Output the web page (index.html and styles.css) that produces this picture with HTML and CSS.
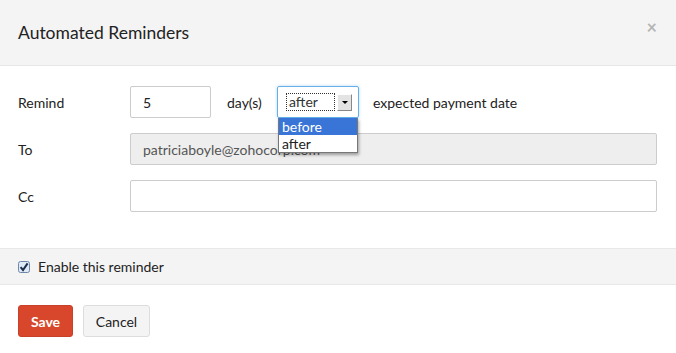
FILE: index.html
```html
<!DOCTYPE html>
<html lang="en">
<head>
  <meta charset="UTF-8" />
  <title>Automated Reminders</title>
  <link rel="stylesheet" href="styles.css">
</head>
<body>
  <div class="modal">
    <div class="modal-header">
      <h3>Automated Reminders</h3>
      <span class="close">&times;</span>
    </div>

    <div class="modal-body">
      <div class="row">
        <label class="lbl">Remind</label>
        <input type="text" class="field days" value="5" />
        <span class="txt daytxt">day(s)</span>
        <div class="select">
          <div class="select-box">
            <span class="select-val">after</span>
            <span class="select-btn"></span>
          </div>
          <ul class="options">
            <li class="active">before</li>
            <li>after</li>
          </ul>
        </div>
        <span class="txt">expected payment date</span>
      </div>

      <div class="row">
        <label class="lbl">To</label>
        <input type="text" class="field wide readonly" value="patriciaboyle@zohocorp.com" readonly />
      </div>

      <div class="row">
        <label class="lbl">Cc</label>
        <input type="text" class="field wide" />
      </div>
    </div>

    <div class="enable">
      <span class="check">
        <svg width="12" height="12" viewBox="0 0 12 12">
          <rect x="0.5" y="0.5" width="11" height="11" rx="2" fill="#dfe9f7" stroke="#6c87a8"/>
          <path d="M2.6 6.2 L5 9 L9.6 2.4" fill="none" stroke="#1c2f4a" stroke-width="2"/>
        </svg>
      </span>
      Enable this reminder
    </div>

    <div class="modal-footer">
      <button class="btn btn-save">Save</button>
      <button class="btn btn-cancel">Cancel</button>
    </div>
  </div>
</body>
</html>
```

FILE: styles.css
```css
body {
  margin: 0;
  background: #fff;
  font-family: Lato, "Open Sans", Arial, sans-serif;
  font-size: 14px;
  color: #222;
}
.modal {
  width: 676px;
}
.modal-header {
  background: #f4f4f4;
  height: 66px;
  border-bottom: 1px solid #e6e6e6;
  display: flex;
  align-items: center;
  justify-content: space-between;
  padding: 0 18px;
  box-sizing: border-box;
}
.modal-header h3 {
  margin: 0;
  font-weight: normal;
  font-size: 17.5px;
  color: #222;
  padding-bottom: 1px;
}
.close {
  color: #b5b5b5;
  font-size: 18px;
  font-weight: bold;
  margin-right: 1px;
  margin-top: -11px;
}
.modal-body {
  padding: 20px 18px 36px 18px;
}
.row {
  display: flex;
  align-items: center;
  margin-bottom: 15px;
}
.row:last-child {
  margin-bottom: 0;
}
.lbl {
  width: 112px;
  flex: none;
}
.field {
  height: 32px;
  box-sizing: border-box;
  border: 1px solid #ccc;
  border-radius: 2px;
  padding: 0 12px;
  font-family: inherit;
  font-size: 14px;
  color: #222;
  outline: none;
}
.days {
  width: 81px;
}
.daytxt {
  width: 50px;
  margin-left: 16px;
}
.wide {
  flex: 1;
  margin-right: 1px;
}
.readonly {
  background: #eee;
  color: #555;
}
/* select with open list */
.select {
  position: relative;
  width: 82px;
  margin-right: 14px;
}
.select-box {
  height: 32px;
  box-sizing: border-box;
  border: 1px solid #66afe9;
  border-radius: 2px;
  box-shadow: 0 0 3px rgba(102, 175, 233, 0.5);
  display: flex;
  align-items: center;
  padding: 0 6px 0 8px;
}
.select-val {
  border: 1px dotted #333;
  width: 49px;
  height: 18px;
  line-height: 16px;
  padding-left: 2px;
  box-sizing: border-box;
  color: #333;
}
.select-btn {
  width: 15px;
  height: 17px;
  margin-left: 2px;
  background: #e3e3e3;
  border-right: 1px solid #888;
  border-bottom: 1px solid #888;
  border-top: 1px solid #fff;
  border-left: 1px solid #fff;
  box-sizing: border-box;
  position: relative;
}
.select-btn::after {
  content: "";
  position: absolute;
  left: 4px;
  top: 6px;
  border-left: 3px solid transparent;
  border-right: 3px solid transparent;
  border-top: 3px solid #000;
}
.options {
  position: absolute;
  top: 32px;
  left: 1px;
  width: 80px;
  margin: 0;
  padding: 0;
  list-style: none;
  background: #fff;
  border: 1px solid #777;
  border-top: none;
  box-sizing: border-box;
  box-shadow: 1px 2px 3px rgba(0, 0, 0, 0.35);
  font-size: 14px;
}
.options li {
  height: 17px;
  line-height: 17px;
  padding-left: 3px;
  color: #222;
}
.options li.active {
  background: #3875d7;
  color: #fff;
}
/* enable band */
.enable {
  background: #f4f4f4;
  border-top: 1px solid #e8e8e8;
  border-bottom: 1px solid #e8e8e8;
  height: 37px;
  display: flex;
  align-items: center;
  padding: 0 18px;
  box-sizing: border-box;
}
.check {
  width: 12px;
  height: 12px;
  margin-right: 8px;
  display: flex;
}
.modal-footer {
  padding: 20px 18px;
  display: flex;
  gap: 10px;
}
.btn {
  height: 32px;
  border-radius: 3px;
  font-family: inherit;
  font-size: 14px;
  padding: 0;
  cursor: pointer;
}
.btn-save {
  background: #d8472b;
  border: 1px solid #c9402a;
  color: #fff;
  font-weight: bold;
  width: 55px;
}
.btn-cancel {
  background: #f4f4f4;
  border: 1px solid #ddd;
  color: #222;
  width: 67px;
}
```
